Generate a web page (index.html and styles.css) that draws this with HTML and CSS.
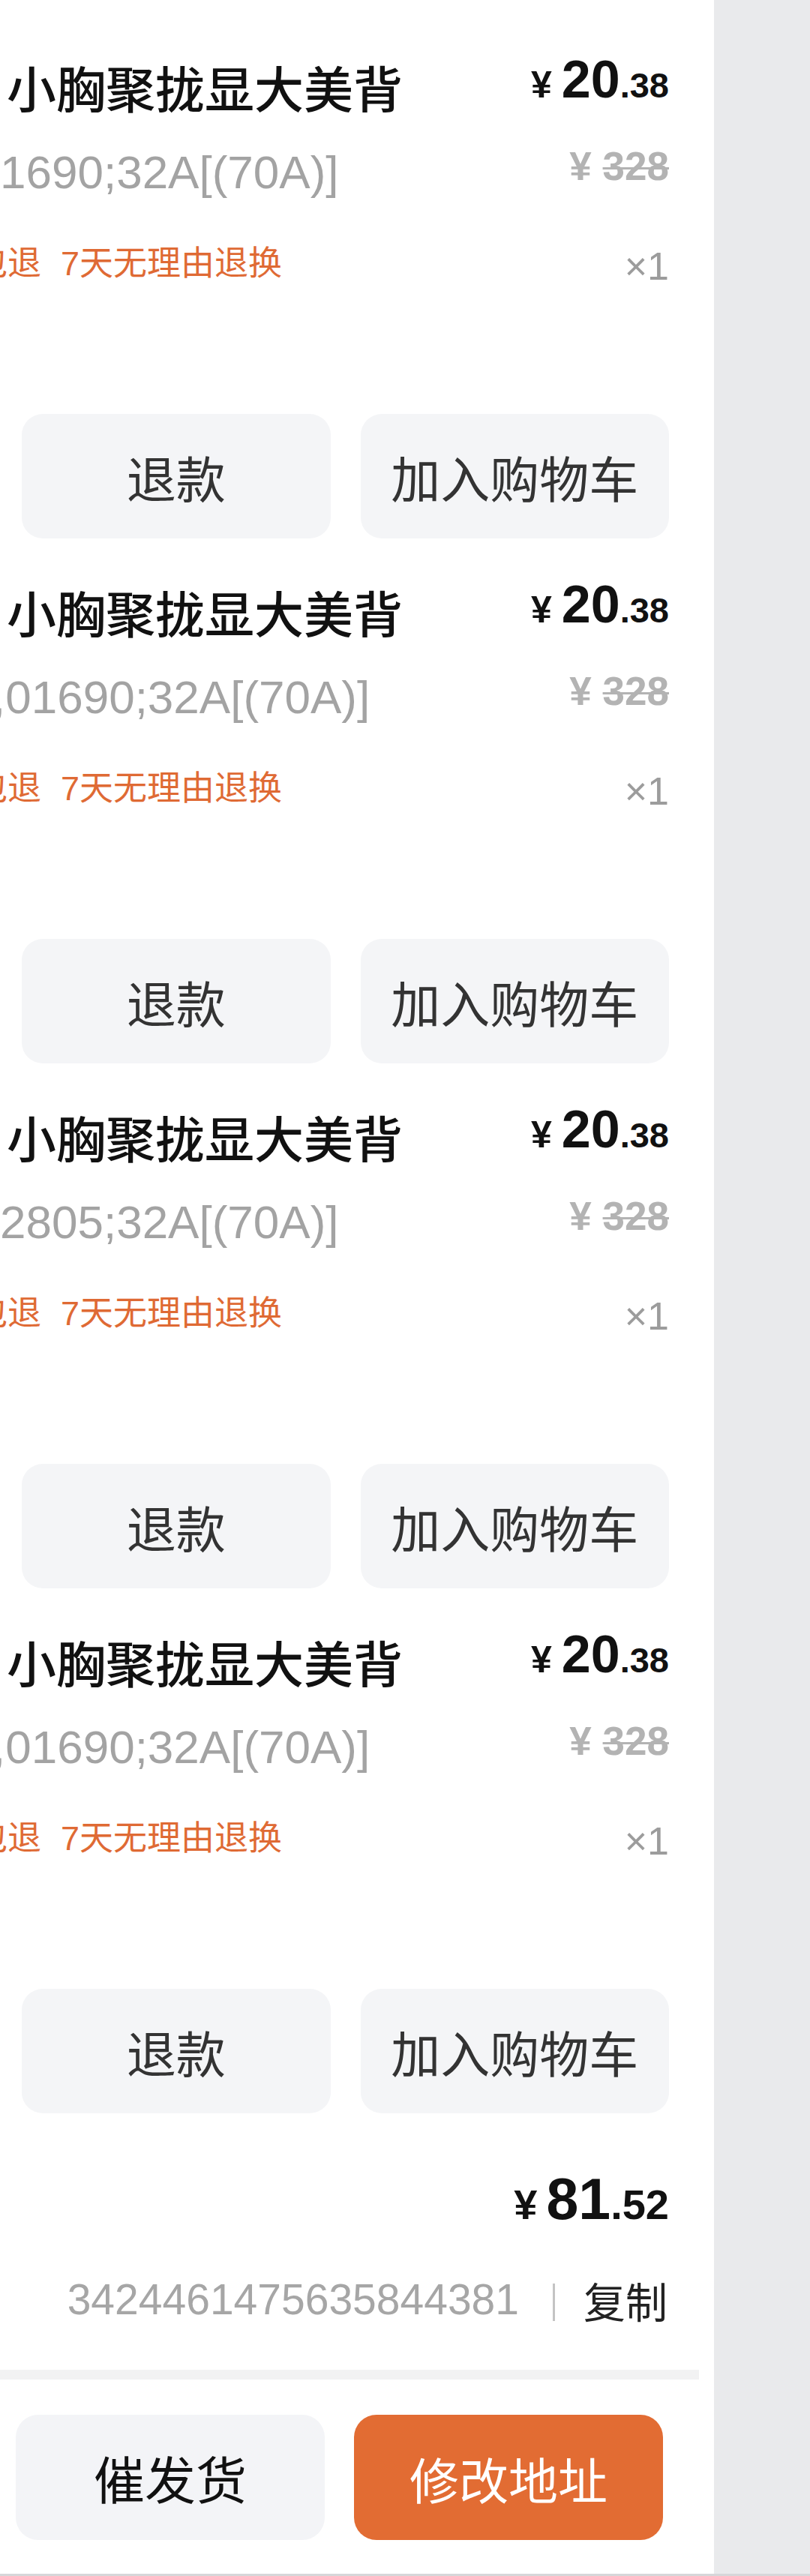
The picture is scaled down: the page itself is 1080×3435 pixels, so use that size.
FILE: index.html
```html
<!DOCTYPE html>
<html lang="zh-CN">
<head>
<meta charset="utf-8">
<title>订单详情</title>
<link rel="stylesheet" href="styles.css">
</head>
<body>
<div class="screen">
  <main class="panel">
    <section class="items">
      <article class="item">
        <div class="row row-title">
          <div class="title">小胸聚拢显大美背</div>
          <div class="price"><span class="yen">¥</span><span class="int">20</span><span class="dec">.38</span></div>
        </div>
        <div class="row row-sku">
          <div class="sku">1690;32A[(70A)]</div>
          <div class="orig"><span class="oyen">¥ </span><s class="onum">328</s></div>
        </div>
        <div class="row row-tags">
          <div class="tags"><span class="tag tag-cut">包退</span><span class="tag">7天无理由退换</span></div>
          <div class="qty">×1</div>
        </div>
        <div class="item-actions">
          <button class="btn">退款</button>
          <button class="btn">加入购物车</button>
        </div>
      </article>
      <article class="item">
        <div class="row row-title">
          <div class="title">小胸聚拢显大美背</div>
          <div class="price"><span class="yen">¥</span><span class="int">20</span><span class="dec">.38</span></div>
        </div>
        <div class="row row-sku">
          <div class="sku sku-cut">,01690;32A[(70A)]</div>
          <div class="orig"><span class="oyen">¥ </span><s class="onum">328</s></div>
        </div>
        <div class="row row-tags">
          <div class="tags"><span class="tag tag-cut">包退</span><span class="tag">7天无理由退换</span></div>
          <div class="qty">×1</div>
        </div>
        <div class="item-actions">
          <button class="btn">退款</button>
          <button class="btn">加入购物车</button>
        </div>
      </article>
      <article class="item">
        <div class="row row-title">
          <div class="title">小胸聚拢显大美背</div>
          <div class="price"><span class="yen">¥</span><span class="int">20</span><span class="dec">.38</span></div>
        </div>
        <div class="row row-sku">
          <div class="sku">2805;32A[(70A)]</div>
          <div class="orig"><span class="oyen">¥ </span><s class="onum">328</s></div>
        </div>
        <div class="row row-tags">
          <div class="tags"><span class="tag tag-cut">包退</span><span class="tag">7天无理由退换</span></div>
          <div class="qty">×1</div>
        </div>
        <div class="item-actions">
          <button class="btn">退款</button>
          <button class="btn">加入购物车</button>
        </div>
      </article>
      <article class="item">
        <div class="row row-title">
          <div class="title">小胸聚拢显大美背</div>
          <div class="price"><span class="yen">¥</span><span class="int">20</span><span class="dec">.38</span></div>
        </div>
        <div class="row row-sku">
          <div class="sku sku-cut">,01690;32A[(70A)]</div>
          <div class="orig"><span class="oyen">¥ </span><s class="onum">328</s></div>
        </div>
        <div class="row row-tags">
          <div class="tags"><span class="tag tag-cut">包退</span><span class="tag">7天无理由退换</span></div>
          <div class="qty">×1</div>
        </div>
        <div class="item-actions">
          <button class="btn">退款</button>
          <button class="btn">加入购物车</button>
        </div>
      </article>
    </section>

    <div class="total"><span class="tyen">¥</span><span class="tint">81</span><span class="tdec">.52</span></div>

    <div class="order">
      <span class="order-no">3424461475635844381</span>
      <span class="sep"></span>
      <span class="copy">复制</span>
    </div>

    <div class="divider"></div>

    <div class="actions">
      <button class="btn btn-light">催发货</button>
      <button class="btn btn-primary">修改地址</button>
    </div>
  </main>
  <aside class="side"></aside>
</div>
<div class="bottom-line"></div>
</body>
</html>
```

FILE: styles.css
```css
* { box-sizing: border-box; }

html, body {
  margin: 0;
  padding: 0;
}

body {
  width: 1080px;
  height: 3435px;
  overflow: hidden;
  background: #ffffff;
  font-family: "Liberation Sans", "Noto Sans CJK SC", sans-serif;
  color: #111111;
}

.screen {
  display: flex;
  height: 3432px;
}

.panel {
  width: 952px;
  flex: 0 0 952px;
  background: #ffffff;
  overflow: hidden;
}

.side {
  flex: 1 1 auto;
  background: #e9eaec;
}

.bottom-line {
  height: 3px;
  background: #d6d7d9;
}

/* ---------- items ---------- */
.items {
  padding-top: 18px;
}

.item {
  padding-top: 42px;
}

.row {
  display: flex;
  justify-content: space-between;
  align-items: center;
  height: 110px;
  padding-right: 60px;
  white-space: nowrap;
}

.row-sku { margin-top: 5px; }
.row-tags { margin-top: 12px; }

.title {
  padding-left: 9px;
  font-family: "Noto Sans CJK SC", sans-serif;
  font-size: 66px;
  font-weight: 500;
  line-height: 110px;
  color: #111111;
}

.price {
  line-height: 110px;
  color: #111111;
  font-weight: 700;
}
.yen {
  font-size: 50px;
  margin-right: 13px;
}
.int {
  font-size: 70px;
}
.dec {
  font-size: 47px;
}

.sku {
  font-size: 62px;
  line-height: 110px;
  color: #a3a3a3;
}
.sku-cut {
  margin-left: -10px;
}

.orig {
  font-size: 53px;
  font-weight: 700;
  line-height: 90px;
  margin-bottom: 16px;
  color: #b3b3b3;
}
.onum {
  text-decoration: line-through;
  text-decoration-thickness: 3px;
}

.tags {
  line-height: 110px;
  color: #df6a34;
  font-size: 45px;
}
.tag {
  font-family: "Liberation Sans", "Noto Sans CJK SC", sans-serif;
}
.tag-cut {
  margin-left: -35px;
  margin-right: 26px;
}

.qty {
  font-size: 52px;
  line-height: 110px;
  color: #9c9c9c;
  margin-top: 6px;
}

.item-actions {
  display: grid;
  grid-template-columns: 1fr 1fr;
  column-gap: 40px;
  margin-top: 145px;
  padding-left: 29px;
  padding-right: 60px;
}

.btn {
  display: flex;
  align-items: center;
  justify-content: center;
  height: 166px;
  border: 0;
  border-radius: 28px;
  background: #f4f5f7;
  font-family: "Noto Sans CJK SC", sans-serif;
  font-size: 66px;
  color: #333333;
  padding: 0;
  margin: 0;
}

/* ---------- total / order ---------- */
.total {
  display: flex;
  justify-content: flex-end;
  align-items: baseline;
  margin-top: 59px;
  height: 110px;
  line-height: 110px;
  padding-right: 60px;
  font-weight: 700;
  color: #111111;
}
.tyen {
  font-size: 56px;
  margin-right: 12px;
}
.tint {
  font-size: 77px;
}
.tdec {
  font-size: 56px;
}

.order {
  display: flex;
  justify-content: flex-end;
  align-items: center;
  margin-top: 24px;
  height: 110px;
  padding-right: 62px;
  white-space: nowrap;
}
.order-no {
  font-size: 57px;
  color: #a6a6a6;
}
.sep {
  width: 3px;
  height: 50px;
  background: #c4c4c4;
  margin: 8px 38px 0 45px;
}
.copy {
  font-family: "Noto Sans CJK SC", sans-serif;
  font-size: 56px;
  color: #222222;
}

.divider {
  margin-top: 39px;
  width: 932px;
  height: 13px;
  background: #f2f2f3;
}

/* ---------- bottom actions ---------- */
.actions {
  display: grid;
  grid-template-columns: 1fr 1fr;
  column-gap: 39px;
  margin-top: 47px;
  padding-left: 21px;
  padding-right: 68px;
}
.actions .btn {
  height: 167px;
  border-radius: 30px;
}
.btn-light {
  background: #f3f4f7;
  color: #111111;
  font-size: 68px;
}
.btn-primary {
  background: #e26c33;
  color: #ffffff;
}
```
